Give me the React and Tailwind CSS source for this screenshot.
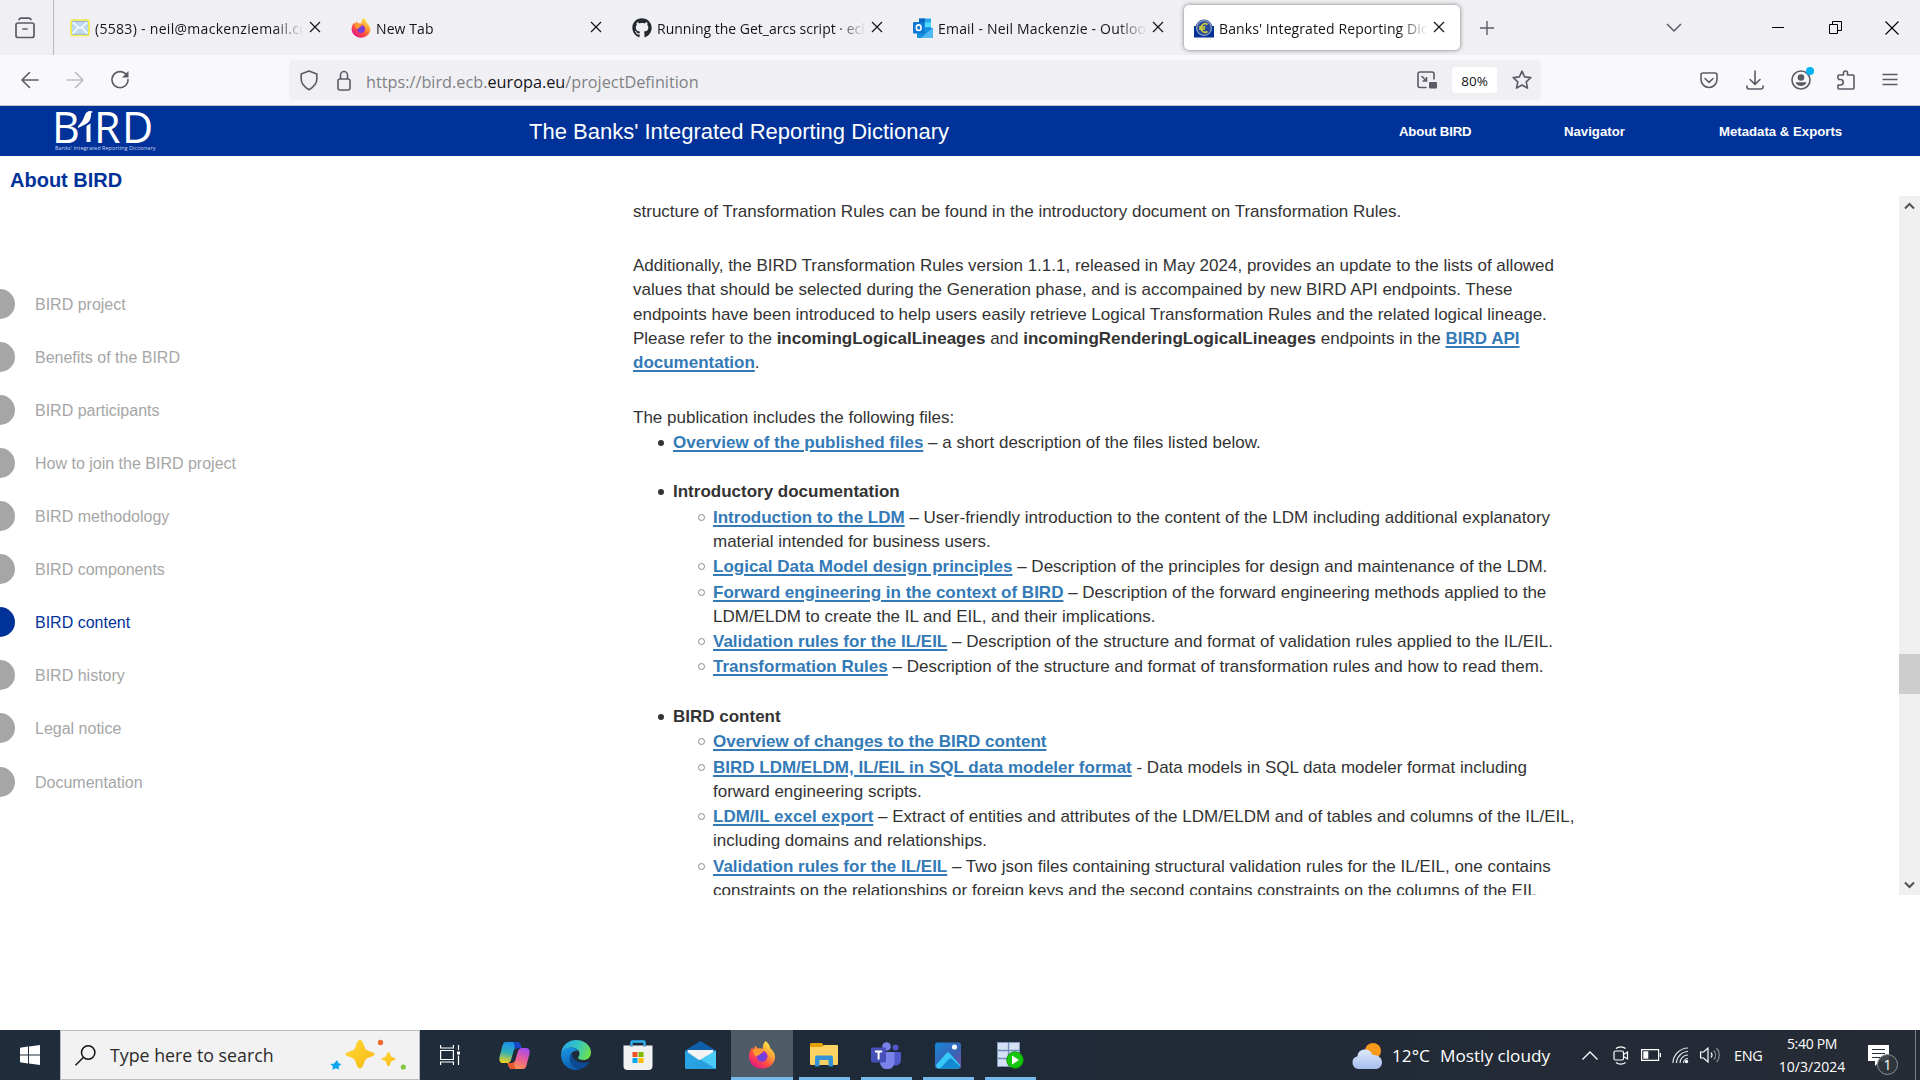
import React from 'react';
import { FaGithub } from 'react-icons/fa';

/* ---------- shared icons ---------- */

function CloseX() {
  return (
    <svg width="12" height="12" viewBox="0 0 12 12" fill="none" stroke="#15141a" strokeWidth="1.2">
      <path d="M1 1l10 10M11 1L1 11" />
    </svg>
  );
}

function FirefoxIcon({ size }) {
  return (
    <svg width={size} height={size} viewBox="0 0 32 32">
      <defs>
        <linearGradient id={'ffx' + size} x1="0.85" y1="0.05" x2="0.2" y2="0.95">
          <stop offset="0" stopColor="#fff44f" />
          <stop offset="0.35" stopColor="#ffa436" />
          <stop offset="0.65" stopColor="#ff5040" />
          <stop offset="1" stopColor="#e31587" />
        </linearGradient>
        <radialGradient id={'ffg' + size} cx="0.5" cy="0.6" r="0.6">
          <stop offset="0" stopColor="#5b4be0" />
          <stop offset="1" stopColor="#a12bd0" />
        </radialGradient>
      </defs>
      <path
        d="M20 0c3 2 5 5 5.500 8.500C28 10 31 14 31 18.500 30.600 26 24 31.500 16 31.500S1.500 26 1 18.500C.8 13 3 9.500 5 7c.2 1.200.5 2 1 2.600C7.500 8 8 6 9 5c.6 2 1.600 3 3 3.500 2-.2 4 0 5 .6C16.500 5.500 17.500 2.500 20 0z"
        fill={'url(#ffx' + size + ')'}
      />
      <circle cx="16" cy="17.500" r="6.300" fill={'url(#ffg' + size + ')'} />
      <path d="M6 10c3-1.500 6-.8 8.500.8 1.500.6 3 .8 3 1.600-.6 1.200-2.600 1.200-3.600 2.400-.6 1.600-2.900 1-3.900 3C7.500 17 5.500 13 6 10z" fill="#ff9a2e" />
    </svg>
  );
}

function MailFavicon() {
  return (
    <svg width="20" height="20" viewBox="0 0 20 20">
      <rect x="1" y="2" width="18" height="15.500" rx="1.500" fill="#b9d4ea" stroke="#f2ee3c" strokeWidth="1.600" />
      <rect x="2" y="3" width="16" height="13.500" fill="#c0d9ee" />
      <path d="M2.500 4l7.500 6.500L17.500 4M2.500 16l5.500-6.500M17.500 16L12 9.500" stroke="#fff" strokeWidth="1.300" fill="none" />
      <path d="M2 3.600h16M2 16.300h16" stroke="#8fb2d0" strokeWidth="0.800" />
    </svg>
  );
}

function OutlookFavicon() {
  return (
    <svg width="20" height="20" viewBox="0 0 20 20">
      <rect x="6" y="0.500" width="12" height="13" fill="#28a8ea" />
      <rect x="6" y="0.500" width="6" height="4" fill="#0a67bd" />
      <rect x="12" y="4.500" width="6" height="4.500" fill="#50d9ff" />
      <path d="M4 9l16 1v9a1 1 0 0 1-1 1H5a1 1 0 0 1-1-1z" fill="#1490df" />
      <path d="M20 9.500v9.500a1 1 0 0 1-1 1H8z" fill="#50b9f4" />
      <rect x="0" y="4" width="11.500" height="11.500" rx="1" fill="#0f78d4" />
      <ellipse cx="5.700" cy="9.700" rx="2.400" ry="2.800" fill="none" stroke="#fff" strokeWidth="1.600" />
    </svg>
  );
}

function EcbFavicon() {
  return (
    <svg width="20" height="20" viewBox="0 0 20 20">
      <path d="M0 8h20v11.500H0z" fill="#003299" />
      <circle cx="10" cy="10" r="8.500" fill="#26489c" />
      <circle cx="10" cy="10" r="7.300" fill="none" stroke="#8fa0c4" strokeWidth="1.200" />
      <path d="M13.500 6.500a4.200 4.200 0 1 0 0 7M5 9h6.500M5 11h6" stroke="#cfd03a" strokeWidth="1.600" fill="none" />
    </svg>
  );
}

function Tab({ icon, title, active, spacing }) {
  return (
    <div className="flex h-full w-[281px] shrink-0 pl-px pr-[4px]">
      <div
        className={
          active
            ? 'my-[5px] flex h-[45px] w-full items-center rounded-[5px] bg-white pl-[10px] shadow-[0_0_4px_rgba(0,0,0,0.5)]'
            : 'my-[5px] flex h-[45px] w-full items-center pl-[10px]'
        }
      >
        <div className="flex w-[25px] shrink-0 items-center">{icon}</div>
        <div
          className={
            'mr-[2px] w-[209px] overflow-hidden whitespace-nowrap pt-[2px] text-[14px] leading-[22px] text-[#15141a] [mask-image:linear-gradient(to_right,black_86%,transparent)] ' +
            spacing
          }
        >
          {title}
        </div>
        <div className="-mt-px flex w-[17px] justify-center">
          <CloseX />
        </div>
      </div>
    </div>
  );
}

function TabStrip() {
  return (
    <div className="flex h-[55px] items-center bg-[#f0f0f4]">
      <div className="flex h-full w-[54px] items-center border-r border-[#b8b8bf] pl-[15px]">
        <svg width="20" height="22" viewBox="0 0 20 22" fill="none" stroke="#5b5b66" strokeWidth="1.700" strokeLinecap="round">
          <rect x="1" y="6" width="18" height="14.500" rx="2" />
          <path d="M4 2.500C4.500 1.500 5 1.200 6 1.200h8c1 0 1.500.3 2 1.300M8 12h4" />
        </svg>
      </div>
      <div className="w-[5px]" />
      <Tab icon={<MailFavicon />} title="(5583) - neil@mackenziemail.com" spacing="tracking-[0.3px]" />
      <Tab icon={<FirefoxIcon size={20} />} title="New Tab" spacing="tracking-[0.1px]" />
      <Tab icon={<FaGithub size={20} color="#24292f" />} title="Running the Get_arcs script · eclipse" spacing="tracking-[0px]" />
      <Tab icon={<OutlookFavicon />} title="Email - Neil Mackenzie - Outlook" spacing="tracking-[0.2px]" />
      <Tab icon={<EcbFavicon />} title="Banks' Integrated Reporting Dictionary" active spacing="tracking-[0.1px]" />
      <div className="flex w-[45px] justify-center">
        <svg width="16" height="16" viewBox="0 0 16 16" stroke="#5b5b66" strokeWidth="1.400">
          <path d="M8 1v14M1 8h14" />
        </svg>
      </div>
      <div className="flex flex-1 items-center justify-end">
        <svg width="16" height="10" viewBox="0 0 16 10" fill="none" stroke="#5b5b66" strokeWidth="1.500">
          <path d="M1 1l7 7 7-7" />
        </svg>
        <div className="-mt-px ml-[90px] h-px w-[12px] bg-black" />
        <svg className="ml-[45px]" width="13" height="13" viewBox="0 0 13 13" fill="none" stroke="#000" strokeWidth="1">
          <path d="M.5 3.500h8v9h-8zM3.500 3.500v-3h9v9h-4" />
        </svg>
        <svg className="ml-[43px] mr-[21px]" width="14" height="14" viewBox="0 0 14 14" stroke="#000" strokeWidth="1.100">
          <path d="M.5.5l13 13M13.500.5l-13 13" />
        </svg>
      </div>
    </div>
  );
}

function Toolbar() {
  return (
    <div className="flex h-[51px] items-center border-b border-[#c4c4c8] bg-[#f9f9fb] pl-[21px] pr-[22px]">
      <svg width="18" height="18" viewBox="0 0 18 18" fill="none" stroke="#5b5b66" strokeWidth="1.600" strokeLinecap="round" strokeLinejoin="round">
        <path d="M17 9H1.500M8.500 1.500L1 9l7.500 7.500" />
      </svg>
      <svg className="ml-[27px]" width="18" height="18" viewBox="0 0 18 18" fill="none" stroke="#bdbdc2" strokeWidth="1.600" strokeLinecap="round" strokeLinejoin="round">
        <path d="M1 9h15.500M9.500 1.500L17 9l-7.500 7.500" />
      </svg>
      <svg className="ml-[26px]" width="20" height="20" viewBox="0 0 20 20" fill="none" stroke="#5b5b66" strokeWidth="1.600">
        <path d="M16.500 5A8 8 0 1 0 18 9.500" strokeLinecap="round" />
        <path d="M18.500 1v6.500H12z" fill="#5b5b66" stroke="none" />
      </svg>
      <div className="ml-[159px] flex h-[40px] w-[1252px] items-center rounded-[5px] bg-[#f0f0f4] pl-[11px]">
        <svg width="18" height="21" viewBox="0 0 18 21" fill="none" stroke="#5b5b66" strokeWidth="1.600" strokeLinejoin="round">
          <path d="M9 1L1.200 4v5.500c0 4.500 3.300 7.500 7.800 10.300 4.500-2.800 7.800-5.800 7.800-10.300V4z" />
        </svg>
        <svg className="ml-[18px]" width="16" height="21" viewBox="0 0 16 21" fill="none" stroke="#5b5b66" strokeWidth="1.600">
          <rect x="2" y="9" width="12" height="11" rx="2" />
          <path d="M4.500 9V5a3.500 3.500 0 0 1 7 0v4" />
        </svg>
        <div className="ml-[14px] flex-1 whitespace-nowrap pt-[4px] text-[16.250px] leading-[24px] text-[#808085]">
          https://bird.ecb.<span className="text-[#15141a]">europa.eu</span>/projectDefinition
        </div>
        <svg width="20" height="18" viewBox="0 0 20 18" fill="none" stroke="#5b5b66" strokeWidth="1.600">
          <path d="M9 16.500H3a2 2 0 0 1-2-2V3a2 2 0 0 1 2-2h12a2 2 0 0 1 2 2v5" strokeLinecap="round" />
          <path d="M4.500 5l4.500 4.500M9.500 6v4H5.500" />
          <rect x="12" y="11" width="8" height="6.500" rx="1" fill="#5b5b66" stroke="none" />
        </svg>
        <div className="ml-[15px] flex h-[26px] w-[45px] items-center justify-center rounded-[4px] bg-white pt-[2px] text-[13.500px] text-[#15141a]">80%</div>
        <svg className="ml-[15px] mr-[9px]" width="20" height="20" viewBox="0 0 20 20" fill="none" stroke="#5b5b66" strokeWidth="1.600" strokeLinejoin="round">
          <path d="M10 1.200l2.600 5.700 6.200.7-4.600 4.200 1.300 6.300L10 15l-5.500 3.100 1.300-6.300L1.200 7.600l6.200-.7z" />
        </svg>
      </div>
      <div className="flex flex-1 items-center justify-end">
        <svg width="18" height="17" viewBox="0 0 18 17" fill="none" stroke="#5b5b66" strokeWidth="1.600" strokeLinecap="round" strokeLinejoin="round">
          <path d="M3 1h12a2 2 0 0 1 2 2v4.500a8 8 0 0 1-16 0V3a2 2 0 0 1 2-2zM5 6.500l4 3.800 4-3.800" />
        </svg>
        <svg className="ml-[28px]" width="18" height="20" viewBox="0 0 18 20" fill="none" stroke="#5b5b66" strokeWidth="1.600" strokeLinecap="round" strokeLinejoin="round">
          <path d="M9 1v13M4 9.500L9 14.300l5-4.800M1 16v1a2 2 0 0 0 2 2h12a2 2 0 0 0 2-2v-1" />
        </svg>
        <div className="relative ml-[27px]">
          <svg width="20" height="20" viewBox="0 0 20 20" fill="none" stroke="#5b5b66" strokeWidth="1.600">
            <circle cx="10" cy="10" r="9" />
            <circle cx="10" cy="7.500" r="3.300" fill="#5b5b66" stroke="none" />
            <path d="M4.500 12.300h11c-.8 2.500-3 3.800-5.500 3.800s-4.700-1.300-5.500-3.800z" fill="#5b5b66" stroke="none" />
          </svg>
          <div className="absolute -top-[3px] left-[15px] h-[8px] w-[8px] rounded-full bg-[#00b3f4]" />
        </div>
        <svg className="ml-[26px]" width="18" height="20" viewBox="0 0 18 20" fill="none" stroke="#5b5b66" strokeWidth="1.600" strokeLinejoin="round">
          <path d="M1 9V6a1 1 0 0 1 1-1h4.500V3a2 2 0 0 1 4 0v2H16a1 1 0 0 1 1 1v12a1 1 0 0 1-1 1H2a1 1 0 0 1-1-1v-3h2.500a2 2 0 0 0 0-5.500H1" />
        </svg>
        <svg className="ml-[27px]" width="16" height="14" viewBox="0 0 16 14" stroke="#5b5b66" strokeWidth="1.500">
          <path d="M.5 1.500h15M.5 6.500h15M.5 11.500h15" />
        </svg>
      </div>
    </div>
  );
}

/* ---------- web page ---------- */

function BirdLogo() {
  return (
    <div className="ml-[52px] flex h-full w-[104px] flex-col pt-[4px] text-white">
      <div className="flex h-[34px] items-start font-['Open_Sans'] text-[43px] font-medium leading-[33px]">
        <span className="w-[26px]">B</span>
        <svg className="h-[33px] w-[15px] shrink-0" viewBox="0 0 15 33" fill="#fff">
          <path d="M-3 19C3 14 5 10 6.500 6 7.500 2.500 10 .8 12.500 1l2.500.8-2 1.500c.5 5-1.500 9-5.500 11L0 18z" />
          <path d="M8.500 16l4-2.500V32h-4z" />
        </svg>
        <span className="w-[29px] pl-px">R</span>
        <span>D</span>
      </div>
      <div className="ml-[3px] whitespace-nowrap font-['Open_Sans'] text-[5.600px] leading-[9px] text-[#c9d4ec]">Banks' Integrated Reporting Dictionary</div>
    </div>
  );
}

function SiteHeader() {
  return (
    <div className="flex h-[50px] items-center bg-[#003299] font-['Liberation_Sans'] text-white">
      <BirdLogo />
      <div className="ml-[373px] w-[870px] pt-[2px] text-[22px] leading-[30px]">The Banks' Integrated Reporting Dictionary</div>
      <div className="flex items-center whitespace-nowrap pt-[2px] text-[13.200px] font-bold">
        <span className="w-[165px] tracking-[-0.15px]">About BIRD</span>
        <span className="w-[155px]">Navigator</span>
        <span>Metadata &amp; Exports</span>
      </div>
    </div>
  );
}

const SECTIONS = [
  'BIRD project',
  'Benefits of the BIRD',
  'BIRD participants',
  'How to join the BIRD project',
  'BIRD methodology',
  'BIRD components',
  'BIRD content',
  'BIRD history',
  'Legal notice',
  'Documentation',
];

function Sidebar() {
  return (
    <div className="w-[633px] shrink-0 pt-[81px]">
      {SECTIONS.map((s) => {
        const on = s === 'BIRD content';
        return (
          <div key={s} className="flex h-[53.120px] items-center">
            <div className={on ? 'h-[30px] w-[15px] rounded-r-full bg-[#003299]' : 'h-[30px] w-[15px] rounded-r-full bg-[#a6a6a6]'} />
            <div className={on ? 'ml-[20px] pt-[2px] text-[16px] text-[#003299]' : 'ml-[20px] pt-[2px] text-[16px] text-[#a6a6a6]'}>{s}</div>
          </div>
        );
      })}
    </div>
  );
}

function Link({ children }) {
  return <a className="font-bold text-[#337ab7] underline decoration-[2px] underline-offset-[2px]">{children}</a>;
}

function Row({ mark, gap = '', children }) {
  return (
    <div className={'flex h-[24px] items-center whitespace-nowrap leading-[24px] ' + gap}>
      {mark === 'disc' && <i className="-mt-px ml-[25px] mr-[9px] h-[6px] w-[6px] rounded-full bg-[#333]" />}
      {mark === 'ring' && <i className="-mt-px ml-[65px] mr-[8px] h-[7px] w-[7px] rounded-full border border-[#8a8a8a]" />}
      {mark === 'cont' && <i className="w-[80px] shrink-0" />}
      <div>{children}</div>
    </div>
  );
}

function Article() {
  return (
    <div className="h-[699px] flex-1 overflow-hidden pt-[4px] text-[17px] text-[#333]">
      <Row>structure of Transformation Rules can be found in the introductory document on Transformation Rules.</Row>
      <Row gap="mt-[30px]">Additionally, the BIRD Transformation Rules version 1.1.1, released in May 2024, provides an update to the lists of allowed</Row>
      <Row>values that should be selected during the Generation phase, and is accompained by new BIRD API endpoints. These</Row>
      <Row gap="mt-px">endpoints have been introduced to help users easily retrieve Logical Transformation Rules and the related logical lineage.</Row>
      <Row>
        Please refer to the <b>incomingLogicalLineages</b> and <b>incomingRenderingLogicalLineages</b> endpoints in the <Link>BIRD API</Link>
      </Row>
      <Row>
        <Link>documentation</Link>.
      </Row>
      <Row gap="mt-[31px]">The publication includes the following files:</Row>
      <Row mark="disc" gap="mt-px">
        <Link>Overview of the published files</Link> – a short description of the files listed below.
      </Row>
      <Row mark="disc" gap="mt-[25px]">
        <b>Introductory documentation</b>
      </Row>
      <Row mark="ring" gap="mt-[2px]">
        <Link>Introduction to the LDM</Link> – User-friendly introduction to the content of the LDM including additional explanatory
      </Row>
      <Row mark="cont">material intended for business users.</Row>
      <Row mark="ring" gap="mt-px">
        <Link>Logical Data Model design principles</Link> – Description of the principles for design and maintenance of the LDM.
      </Row>
      <Row mark="ring" gap="mt-[2px]">
        <Link>Forward engineering in the context of BIRD</Link> – Description of the forward engineering methods applied to the
      </Row>
      <Row mark="cont">LDM/ELDM to create the IL and EIL, and their implications.</Row>
      <Row mark="ring" gap="mt-px">
        <Link>Validation rules for the IL/EIL</Link> – Description of the structure and format of validation rules applied to the IL/EIL.
      </Row>
      <Row mark="ring" gap="mt-px">
        <Link>Transformation Rules</Link> – Description of the structure and format of transformation rules and how to read them.
      </Row>
      <Row mark="disc" gap="mt-[26px]">
        <b>BIRD content</b>
      </Row>
      <Row mark="ring" gap="mt-px">
        <Link>Overview of changes to the BIRD content</Link>
      </Row>
      <Row mark="ring" gap="mt-[2px]">
        <Link>BIRD LDM/ELDM, IL/EIL in SQL data modeler format</Link> - Data models in SQL data modeler format including
      </Row>
      <Row mark="cont">forward engineering scripts.</Row>
      <Row mark="ring" gap="mt-px">
        <Link>LDM/IL excel export</Link> – Extract of entities and attributes of the LDM/ELDM and of tables and columns of the IL/EIL,
      </Row>
      <Row mark="cont">including domains and relationships.</Row>
      <Row mark="ring" gap="mt-[2px]">
        <Link>Validation rules for the IL/EIL</Link> – Two json files containing structural validation rules for the IL/EIL, one contains
      </Row>
      <Row mark="cont">constraints on the relationships or foreign keys and the second contains constraints on the columns of the EIL</Row>
    </div>
  );
}

function Scrollbar() {
  return (
    <div className="flex h-[699px] w-[21px] flex-col items-center bg-[#f0f0f0]">
      <svg className="mt-[6px]" width="11" height="8" viewBox="0 0 11 8" fill="none" stroke="#505050" strokeWidth="2">
        <path d="M1 6.500l4.500-4.500L10 6.500" />
      </svg>
      <div className="mt-[444px] h-[40px] w-full bg-[#cdcdcd]" />
      <svg className="mb-[6px] mt-auto" width="11" height="8" viewBox="0 0 11 8" fill="none" stroke="#505050" strokeWidth="2">
        <path d="M1 1.500L5.500 6 10 1.500" />
      </svg>
    </div>
  );
}

/* ---------- taskbar ---------- */

function Cell({ children, active, open }) {
  return (
    <div className={'flex h-full w-[62px] flex-col items-center ' + (active ? 'bg-[#4e5a65]' : '')}>
      <div className="flex h-[47px] items-center pt-[3px]">{children}</div>
      {open && <div className={active ? 'h-[3px] w-full bg-[#76b9ed]' : 'h-[3px] w-[51px] bg-[#76b9ed]'} />}
    </div>
  );
}

function SearchBox() {
  return (
    <div className="flex h-[50px] w-[360px] items-center border border-[#bcbcbc] bg-[#f2f2f2] pl-[14px]">
      <svg width="21" height="21" viewBox="0 0 21 21" fill="none" stroke="#111" strokeWidth="1.500">
        <circle cx="13.200" cy="7.500" r="6.700" />
        <path d="M8.500 12.300L.5 20.300" />
      </svg>
      <div className="ml-[14px] w-[220px] whitespace-nowrap pt-px text-[17.800px] text-[#2b2b2b]">Type here to search</div>
      <svg width="76" height="32" viewBox="0 0 76 32">
        <defs>
          <linearGradient id="spark" x1="0" y1="0" x2="1" y2="1">
            <stop offset="0" stopColor="#ffd93b" />
            <stop offset="1" stopColor="#f8b810" />
          </linearGradient>
        </defs>
        <path d="M30 1c3.500 0 4 7.500 6 9.500s8.500 2.600 8.500 4.800-6.500 2.800-8.500 4.800S33.500 29.500 30 29.500s-4-7.400-6-9.400-8.500-2.600-8.500-4.800 6.500-2.800 8.500-4.800S26.500 1 30 1z" fill="url(#spark)" />
        <path d="M58.500 13c1.600 0 1.800 3.600 2.800 4.600s4.200 1.200 4.200 2.400-3.200 1.400-4.200 2.400-1.200 4.600-2.800 4.600-1.800-3.600-2.800-4.600-4.200-1.200-4.200-2.400 3.200-1.400 4.200-2.400 1.200-4.600 2.800-4.600z" fill="url(#spark)" />
        <path d="M7 21l1.500 3.200 3 .8-2.800 2.200.3 3.300-3.200-1.300-3.300 1.500.3-3.500L.5 25l3.700-.5z" fill="#0aa5ee" />
        <circle cx="50.500" cy="3.500" r="2.700" fill="#ef6a2c" />
        <circle cx="73.300" cy="28" r="2.600" fill="#86c440" />
      </svg>
    </div>
  );
}

function CopilotIcon() {
  return (
    <svg width="31" height="29" viewBox="0 0 31 29">
      <defs>
        <linearGradient id="cpa" x1="0.5" y1="0" x2="0.3" y2="1">
          <stop offset="0" stopColor="#1b8df0" />
          <stop offset="0.5" stopColor="#2fb0b8" />
          <stop offset="1" stopColor="#f2d21c" />
        </linearGradient>
        <linearGradient id="cpb" x1="0.7" y1="0" x2="0.3" y2="1">
          <stop offset="0" stopColor="#a34bf0" />
          <stop offset="0.5" stopColor="#ec5f94" />
          <stop offset="1" stopColor="#ff9a4a" />
        </linearGradient>
      </defs>
      <path d="M7 1h11c2 0 3 1.500 3.600 3.500L22.500 7h-4c-2.500 0-3.500 1.500-4.200 4l-2.100 7.500c-.7 2.200-2 3.500-4.200 3.500H3.500C0 22 0 18 .8 15L3.500 4.500C4.200 2.200 5 1 7 1z" fill="url(#cpa)" />
      <path d="M14 1h4c2 0 3 1.500 3.600 3.500L22.500 7h-4c-1.500 0-2.500.6-3.200 1.800C16 5 15.500 2 14 1z" fill="#1743c7" />
      <path d="M24 28H13c-2 0-3-1.500-3.600-3.500L8.500 22h4c2.500 0 3.500-1.500 4.200-4l2.100-7.500C19.500 8.300 20.800 7 23 7h4.500c3.500 0 3.500 4 2.700 7l-2.700 10.500C26.800 26.800 26 28 24 28z" fill="url(#cpb)" />
      <path d="M17 28h-4c-2 0-3-1.500-3.600-3.500L8.500 22h4c1.500 0 2.500-.6 3.200-1.800-.7 3.800-.2 6.800 1.300 7.800z" fill="#e8552e" />
    </svg>
  );
}

function EdgeIcon() {
  return (
    <svg width="30" height="30" viewBox="0 0 30 30">
      <defs>
        <linearGradient id="ega" x1="0" y1="0.3" x2="1" y2="0.6">
          <stop offset="0" stopColor="#2aa6e6" />
          <stop offset="0.5" stopColor="#34c5c2" />
          <stop offset="1" stopColor="#6fe04a" />
        </linearGradient>
        <linearGradient id="egb" x1="0" y1="0" x2="0.3" y2="1">
          <stop offset="0" stopColor="#1b9ae4" />
          <stop offset="1" stopColor="#0c5fb4" />
        </linearGradient>
      </defs>
      <path d="M0 14C.8 5.500 7 0 15 0c9 0 15 6 15 12.500 0 5-3.800 7.500-7.500 7.500-3.500 0-5.500-1-5.500-2.200 0-.8 1.500-1.500 1.500-4 0-3.500-3.500-6.300-8-6.300C5 7.500 1 10.500 0 14z" fill="url(#ega)" />
      <path d="M0 15C0 10 5 7.500 10.500 7.500c3 0 5.500 1.200 6.800 3C12 10 9 14 9 18c0 6 4.500 11 10 11.200-1.200.5-2.700.8-4 .8C6.500 30 0 23.500 0 15z" fill="url(#egb)" />
      <path d="M11.500 13.500C8 16 8 20.500 10 24c2.200 3.800 6 5.500 9.500 5 3.500-1 6.800-3.500 8.500-6.500.4-.8-.3-1.200-1-.8-1.300.6-3 1-5 1-6 0-11.500-4-10.500-9.200z" fill="#0d4a94" />
    </svg>
  );
}

function StoreIcon() {
  return (
    <svg width="30" height="30" viewBox="0 0 30 30">
      <path d="M8.500 7V2.500a1 1 0 0 1 1-1h11a1 1 0 0 1 1 1V7" fill="none" stroke="#2bb2f0" strokeWidth="2.400" />
      <path d="M.5 5.500h29V26a4 4 0 0 1-4 4h-21a4 4 0 0 1-4-4z" fill="#f1f1f1" />
      <path d="M8.500 5.500v1M21.500 5.500v1" stroke="#1470b8" strokeWidth="2.400" />
      <path d="M9.500 12h5v5h-5z" fill="#f25022" />
      <path d="M15.500 12h5v5h-5z" fill="#7fba00" />
      <path d="M9.500 18h5v5h-5z" fill="#00a4ef" />
      <path d="M15.500 18h5v5h-5z" fill="#ffb900" />
    </svg>
  );
}

function MailIcon() {
  return (
    <svg width="31" height="28" viewBox="0 0 31 28">
      <path d="M0 9.500L15.500 0 31 9.500V14H0z" fill="#0f5ea8" />
      <path d="M2.500 9h26v10h-26z" fill="#f3f3f3" />
      <path d="M0 9.500L15.500 20 31 9.500V26.500a1.500 1.500 0 0 1-1.500 1.500h-28A1.500 1.500 0 0 1 0 26.500z" fill="#2aa3e4" />
      <path d="M31 9.500L15.500 18.500 30 28l1-1.500z" fill="#4ccaf8" />
      <path d="M0 28l15.500-9.500L31 28z" fill="#28a0e0" />
    </svg>
  );
}

function ExplorerIcon() {
  return (
    <svg width="28" height="24" viewBox="0 0 28 24">
      <path d="M1 0h11l2 3v4H0V1z" fill="#e3a008" />
      <path d="M0 4h12l2-2h13a1 1 0 0 1 1 1v18a1 1 0 0 1-1 1H1a1 1 0 0 1-1-1z" fill="#fdd262" />
      <path d="M5 23.500V14.500a2 2 0 0 1 2-2h14a2 2 0 0 1 2 2v9h-4.500V17h-9v6.500z" fill="#3492d8" />
    </svg>
  );
}

function TeamsIcon() {
  return (
    <svg width="30" height="27" viewBox="0 0 30 27">
      <circle cx="24.500" cy="5.500" r="3" fill="#5059c9" />
      <circle cx="15.500" cy="4.500" r="4.300" fill="#7b83eb" />
      <path d="M20 10h9a1 1 0 0 1 1 1v6.500c0 4-3 6-6 6l-4-1z" fill="#5059c9" />
      <path d="M9 10h13.500a1 1 0 0 1 1 1v9a7 7 0 0 1-14.500 0z" fill="#7b83eb" />
      <rect x="0" y="5.500" width="15" height="15" rx="1.400" fill="#464eb8" />
      <path d="M4 9.500h7.200M7.600 9.500v8" stroke="#fff" strokeWidth="2" />
    </svg>
  );
}

function PhotosIcon() {
  return (
    <svg width="26" height="27" viewBox="0 0 26 27">
      <defs>
        <linearGradient id="pha" x1="0" y1="0" x2="1" y2="1">
          <stop offset="0" stopColor="#1786d8" />
          <stop offset="0.6" stopColor="#3a62b4" />
          <stop offset="1" stopColor="#7a4fa8" />
        </linearGradient>
      </defs>
      <rect x="0" y="0.500" width="26" height="26" rx="2.500" fill="url(#pha)" />
      <path d="M1 23L11.500 11a2 2 0 0 1 3 0L25.500 23.500c-.4 2-1.500 3-3 3h-19c-1.500 0-2.500-1.500-2.500-3.500z" fill="#35c8f8" />
      <path d="M5 26.500l9-9.500a2 2 0 0 1 3 0l8.500 8c-.6 1-1.500 1.500-3 1.500z" fill="#1588d2" />
      <circle cx="19.500" cy="5" r="2.600" fill="#f3f6fb" />
    </svg>
  );
}

function DbRunIcon() {
  return (
    <svg width="27" height="27" viewBox="0 0 27 27">
      <rect x="0.500" y="0.500" width="22" height="24" fill="#d5e0f2" stroke="#8098bd" />
      <path d="M0 8.500h23M0 16.500h23M11.500 0v24" stroke="#6f8cba" strokeWidth="1.300" />
      <circle cx="18" cy="18" r="8.300" fill="#16c60c" stroke="#0c8f06" strokeWidth="0.800" />
      <path d="M15 13.500l7 4.500-7 4.500z" fill="#fff" />
    </svg>
  );
}

function Taskbar() {
  return (
    <div className="flex h-[50px] bg-linear-to-r from-[#1f2d3c] via-[#1f2a38] to-[#262b35] text-white">
      <div className="flex w-[60px] items-center justify-center">
        <svg width="20" height="20" viewBox="0 0 20 20" fill="#fff">
          <path d="M0 2.800l8-1.200v8H0zM9 1.400L20 0v9.600H9zM0 10.500h8v8l-8-1.200zM9 10.500h11V20l-11-1.500z" />
        </svg>
      </div>
      <SearchBox />
      <div className="flex w-[63px] items-center pl-[20px]">
        <svg width="20" height="20" viewBox="0 0 20 20" fill="none" stroke="#fff" strokeWidth="1.200">
          <path d="M.6 5.500h12.800v9H.6zM.6 0v3h12.800V0M.6 20v-3h12.800v3M18.500 0v5M18.500 10.500V20" />
          <path d="M17 6.500h3v3h-3z" fill="#fff" stroke="none" />
        </svg>
      </div>
      <Cell><CopilotIcon /></Cell>
      <Cell><EdgeIcon /></Cell>
      <Cell><StoreIcon /></Cell>
      <Cell><MailIcon /></Cell>
      <Cell active open><FirefoxIcon size={28} /></Cell>
      <Cell open><ExplorerIcon /></Cell>
      <Cell open><TeamsIcon /></Cell>
      <Cell open><PhotosIcon /></Cell>
      <Cell open><DbRunIcon /></Cell>
      <div className="flex flex-1 items-center whitespace-nowrap pl-[311px]">
        <svg className="mt-[2px]" width="30" height="26" viewBox="0 0 30 26">
          <defs>
            <linearGradient id="cl" x1="0" y1="0" x2="0" y2="1">
              <stop offset="0" stopColor="#dfe9fb" />
              <stop offset="1" stopColor="#a4bdee" />
            </linearGradient>
          </defs>
          <circle cx="21" cy="8" r="8" fill="#f79a1c" />
          <path d="M6.500 26a6.500 6.500 0 0 1-1-12.800C5.500 9 9 6.500 13 6.500c3.500 0 6.500 2 7.500 5.500 5-.5 9.500 2.500 9.500 7.200 0 4-3 6.800-6.500 6.800z" fill="url(#cl)" />
        </svg>
        <div className="ml-[10px] w-[48px] pt-px text-[17.200px]">12°C</div>
        <div className="w-[142px] pt-px text-[17.200px]">Mostly cloudy</div>
        <svg width="16" height="9" viewBox="0 0 16 9" fill="none" stroke="#fff" strokeWidth="1.300">
          <path d="M.5 8.500L8 1l7.500 7.500" />
        </svg>
        <svg className="ml-[15px]" width="16" height="19" viewBox="0 0 16 19" fill="none" stroke="#fff" strokeWidth="1.200">
          <rect x="1" y="5" width="9.500" height="9" rx="1.500" />
          <path d="M10.500 8.500l4-2.500v7l-4-2.500M3 2.500c2.500-2.200 7-2.200 9.500 0M3 16.500c2.500 2.200 7 2.200 9.500 0" />
        </svg>
        <svg className="ml-[12px]" width="20" height="12" viewBox="0 0 20 12" fill="none" stroke="#fff" strokeWidth="1.200">
          <path d="M.6.6h17v10.800H.6zM19.400 4v4" />
          <path d="M2.300 2.300h5v7.400h-5z" fill="#fff" stroke="none" />
        </svg>
        <svg className="ml-[11px]" width="17" height="17" viewBox="0 0 17 17" fill="none" stroke="#dfe2e5" strokeWidth="1.200">
          <path d="M1 16C1 8 8 1 16 1M4.500 16C4.500 10 10 4.500 16 4.500M8 16c0-4.500 3.500-8 8-8M11.500 16c0-2.500 2-4.500 4.500-4.500" />
          <circle cx="14.500" cy="14.500" r="1.700" fill="#fff" stroke="none" />
        </svg>
        <svg className="ml-[11px]" width="21" height="18" viewBox="0 0 21 18" fill="none" stroke="#fff" strokeWidth="1.200">
          <path d="M.6 6h3L8 2v14l-4.400-4h-3z" />
          <path d="M11 6.500c1.200 1.500 1.200 3.500 0 5" />
          <path d="M13.800 4.500c2.400 2.600 2.400 6.400 0 9M16.600 2c3.600 4 3.600 10 0 14" stroke="#8b9096" />
        </svg>
        <div className="ml-[13px] w-[43px] pt-px text-[14.500px] tracking-[-0.3px]">ENG</div>
        <div className="flex w-[70px] flex-col items-center text-[14px] leading-[23px]">
          <span className="tracking-[-0.3px]">5:40 PM</span>
          <span>10/3/2024</span>
        </div>
        <div className="relative ml-[21px] mt-[10px] h-[31px] w-[30px]">
          <svg width="21" height="22" viewBox="0 0 21 22">
            <path d="M0 0h21v16H12l-5 5v-5H0z" fill="#fff" />
            <path d="M4 4.500h13M4 8.500h13M4 12.500h9" stroke="#26303a" strokeWidth="1.200" />
          </svg>
          <div className="absolute left-[9px] top-[9px] flex h-[21px] w-[21px] items-center justify-center rounded-full border border-[#8d9298] bg-[#30363d]/90 text-[14px]">1</div>
        </div>
      </div>
      <div className="mr-[4px] w-px bg-[#7b828a]" />
    </div>
  );
}

export default function App() {
  return (
    <div className="flex h-[1080px] w-[1920px] flex-col overflow-hidden bg-white font-['Open_Sans',sans-serif]">
      <TabStrip />
      <Toolbar />
      <SiteHeader />
      <div className="flex flex-1 flex-col font-['Liberation_Sans',sans-serif]">
        <div className="h-[40px] pl-[10px] pt-[9px] text-[20px] font-bold leading-[30px] text-[#003299]">About BIRD</div>
        <div className="flex">
          <Sidebar />
          <Article />
          <Scrollbar />
        </div>
      </div>
      <Taskbar />
    </div>
  );
}
